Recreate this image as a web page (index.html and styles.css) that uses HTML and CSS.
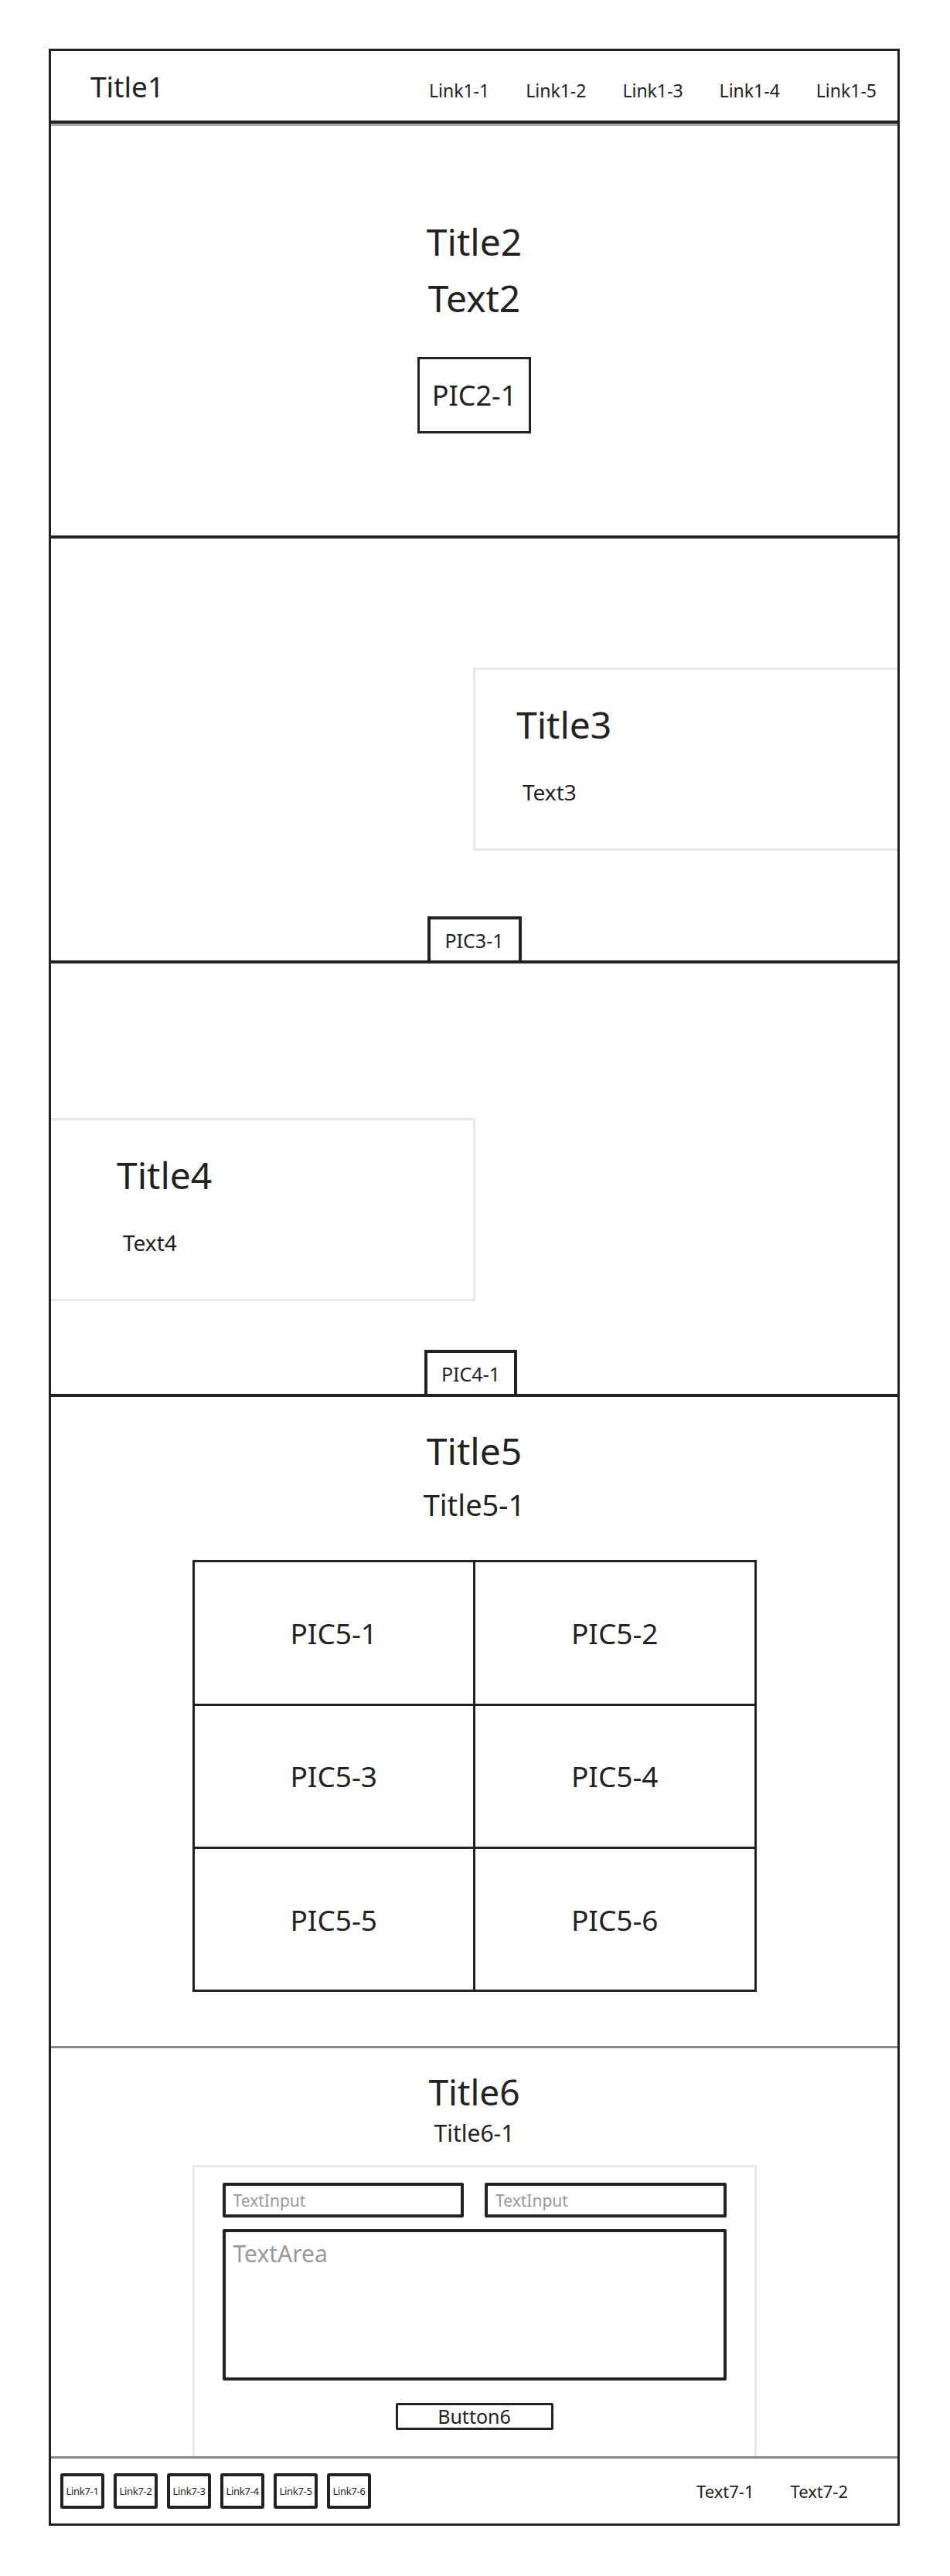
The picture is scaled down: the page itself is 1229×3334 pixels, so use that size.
FILE: index.html
```html
<!DOCTYPE html>
<html lang="en">
<head>
    <meta charset="UTF-8">
    <meta name="viewport" content="width=device-width, initial-scale=1.0">
    <title>Wireframe</title>
    <link rel="stylesheet" href="styles.css">
</head>
<body>
<div class="frame">
    <!-- Top bar -->
    <header class="topbar">
        <div class="brand">Title1</div>
        <nav class="nav">
            <a href="#">Link1-1</a>
            <a href="#">Link1-2</a>
            <a href="#">Link1-3</a>
            <a href="#">Link1-4</a>
            <a href="#">Link1-5</a>
        </nav>
    </header>

    <!-- Hero -->
    <section class="hero">
        <h1 class="hero-title">Title2</h1>
        <p class="hero-text">Text2</p>
        <div class="pic pic-hero">PIC2-1</div>
    </section>

    <!-- Feature, card on the right -->
    <section class="feature feature-right">
        <div class="feature-card card-right">
            <h2 class="card-title">Title3</h2>
            <p class="card-text">Text3</p>
        </div>
        <div class="pic pic-tab">PIC3-1</div>
    </section>

    <!-- Feature, card on the left -->
    <section class="feature feature-left">
        <div class="feature-card card-left">
            <h2 class="card-title">Title4</h2>
            <p class="card-text">Text4</p>
        </div>
        <div class="pic pic-tab pic-tab-shift">PIC4-1</div>
    </section>

    <!-- Gallery -->
    <section class="gallery">
        <h2 class="section-title">Title5</h2>
        <h3 class="section-sub">Title5-1</h3>
        <div class="pic-grid">
            <div class="cell">PIC5-1</div>
            <div class="cell">PIC5-2</div>
            <div class="cell">PIC5-3</div>
            <div class="cell">PIC5-4</div>
            <div class="cell">PIC5-5</div>
            <div class="cell">PIC5-6</div>
        </div>
    </section>

    <!-- Contact form -->
    <section class="contact">
        <h2 class="contact-title">Title6</h2>
        <h3 class="contact-sub">Title6-1</h3>
        <form class="contact-form">
            <div class="form-row">
                <input type="text" placeholder="TextInput">
                <input type="text" placeholder="TextInput">
            </div>
            <textarea placeholder="TextArea"></textarea>
            <button type="button" class="form-button">Button6</button>
        </form>
    </section>

    <!-- Footer -->
    <footer class="footer">
        <div class="footer-links">
            <a href="#">Link7-1</a>
            <a href="#">Link7-2</a>
            <a href="#">Link7-3</a>
            <a href="#">Link7-4</a>
            <a href="#">Link7-5</a>
            <a href="#">Link7-6</a>
        </div>
        <div class="footer-texts">
            <span>Text7-1</span>
            <span>Text7-2</span>
        </div>
    </footer>
</div>
</body>
</html>
```

FILE: styles.css
```css
/* Wireframe page */
body {
    margin: 0;
    font-family: "Noto Sans", "Liberation Sans", sans-serif;
    color: #222;
    background-color: #fff;
}
h1, h2, h3, p {
    margin: 0;
    font-weight: normal;
}
a {
    color: #222;
    text-decoration: none;
}
.frame {
    width: 1095px;
    margin: 63px 0 0 63px;
    border: 3px solid #222;
}

/* Top bar */
.topbar {
    box-sizing: border-box;
    height: 94px;
    display: flex;
    justify-content: space-between;
    align-items: baseline;
    padding: 24px 27px 0 51px;
    border-bottom: 4px solid #222;
    box-shadow: 0 3px 0 #aaa;
}
.brand {
    font-size: 37px;
    line-height: 44px;
}
.nav {
    display: flex;
    gap: 47px;
    font-size: 23px;
}

/* Hero */
.hero {
    box-sizing: border-box;
    height: 537px;
    display: flex;
    flex-direction: column;
    align-items: center;
    padding-top: 124px;
    border-bottom: 4px solid #222;
}
.hero-title,
.hero-text {
    font-size: 48px;
    line-height: 1.2;
}
.hero-text {
    margin-top: 15px;
}
.pic {
    box-sizing: border-box;
    display: flex;
    justify-content: center;
    align-items: center;
    border: 3px solid #222;
}
.pic-hero {
    width: 147px;
    height: 99px;
    margin-top: 48px;
    font-size: 36px;
}

/* Feature sections */
.feature {
    box-sizing: border-box;
    display: flex;
    flex-direction: column;
    border-bottom: 4px solid #222;
}
.feature-right {
    height: 550px;
    padding-top: 167px;
}
.feature-left {
    height: 561px;
    padding-top: 200px;
}
.feature-card {
    box-sizing: border-box;
    height: 237px;
    padding-top: 42px;
    border: 3px solid #e8e8e8;
}
.card-right {
    margin-left: 546px;
    border-right: none;
    padding-left: 53px;
}
.card-left {
    width: 549px;
    border-left: none;
    padding-left: 85px;
}
.card-title {
    font-size: 48px;
    line-height: 1.2;
}
.card-text {
    margin-top: 41px;
    padding-left: 8px;
    font-size: 28px;
    line-height: 34px;
}
.pic-tab {
    width: 122px;
    height: 57px;
    margin-top: auto;
    align-self: center;
    border-width: 4px;
    border-bottom: none;
    font-size: 25px;
}
.pic-tab-shift {
    width: 120px;
    margin-right: 9px;
}

/* Gallery */
.gallery {
    box-sizing: border-box;
    height: 843px;
    display: flex;
    flex-direction: column;
    align-items: center;
    padding-top: 41px;
    border-bottom: 3px solid #888;
}
.section-title {
    font-size: 48px;
    line-height: 1.2;
}
.section-sub {
    margin-top: 18px;
    font-size: 38px;
    line-height: 1.2;
}
.pic-grid {
    box-sizing: border-box;
    width: 730px;
    height: 559px;
    margin-top: 49px;
    display: grid;
    grid-template-columns: 1fr 1fr;
    grid-template-rows: 1fr 1fr 1fr;
    gap: 3px;
    padding: 3px;
    background-color: #222;
}
.cell {
    display: flex;
    justify-content: center;
    align-items: center;
    background-color: #fff;
    font-size: 37px;
}

/* Contact */
.contact {
    box-sizing: border-box;
    height: 531px;
    display: flex;
    flex-direction: column;
    align-items: center;
    padding-top: 29px;
    border-bottom: 3px solid #888;
}
.contact-title {
    font-size: 46px;
    line-height: 1.2;
}
.contact-sub {
    margin-top: 8px;
    font-size: 30px;
    line-height: 36px;
}
.contact-form {
    box-sizing: border-box;
    width: 730px;
    flex: 1;
    margin-top: 23px;
    display: flex;
    flex-direction: column;
    align-items: center;
    padding: 20px 36px 0;
    border: 3px solid #e8e8e8;
    border-bottom: none;
}
.form-row {
    display: flex;
    gap: 27px;
    width: 100%;
}
.form-row input {
    box-sizing: border-box;
    flex: 1;
    min-width: 0;
    height: 45px;
    padding: 0 10px;
    border: 4px solid #222;
    border-radius: 2px;
    font-family: inherit;
    font-size: 21px;
    color: #222;
}
.contact-form textarea {
    box-sizing: border-box;
    width: 100%;
    height: 196px;
    margin-top: 15px;
    padding: 10px 10px;
    border: 4px solid #222;
    border-radius: 2px;
    font-family: inherit;
    font-size: 30px;
    line-height: 36px;
    resize: none;
}
.contact-form ::placeholder {
    color: #999;
}
.form-button {
    box-sizing: border-box;
    width: 204px;
    height: 35px;
    margin-top: 29px;
    padding: 0;
    border: 3px solid #222;
    border-radius: 2px;
    background-color: #fff;
    font-family: inherit;
    font-size: 25px;
    line-height: 1;
    color: #222;
}

/* Footer */
.footer {
    box-sizing: border-box;
    height: 84px;
    display: flex;
    justify-content: space-between;
    align-items: center;
    padding: 0 64px 0 12px;
}
.footer-links {
    display: flex;
    gap: 12px;
}
.footer-links a {
    box-sizing: border-box;
    width: 57px;
    height: 46px;
    display: flex;
    justify-content: center;
    align-items: center;
    border: 4px solid #222;
    border-radius: 3px;
    font-size: 13px;
    letter-spacing: -0.3px;
}
.footer-texts {
    display: flex;
    gap: 47px;
    font-size: 22px;
}
```
